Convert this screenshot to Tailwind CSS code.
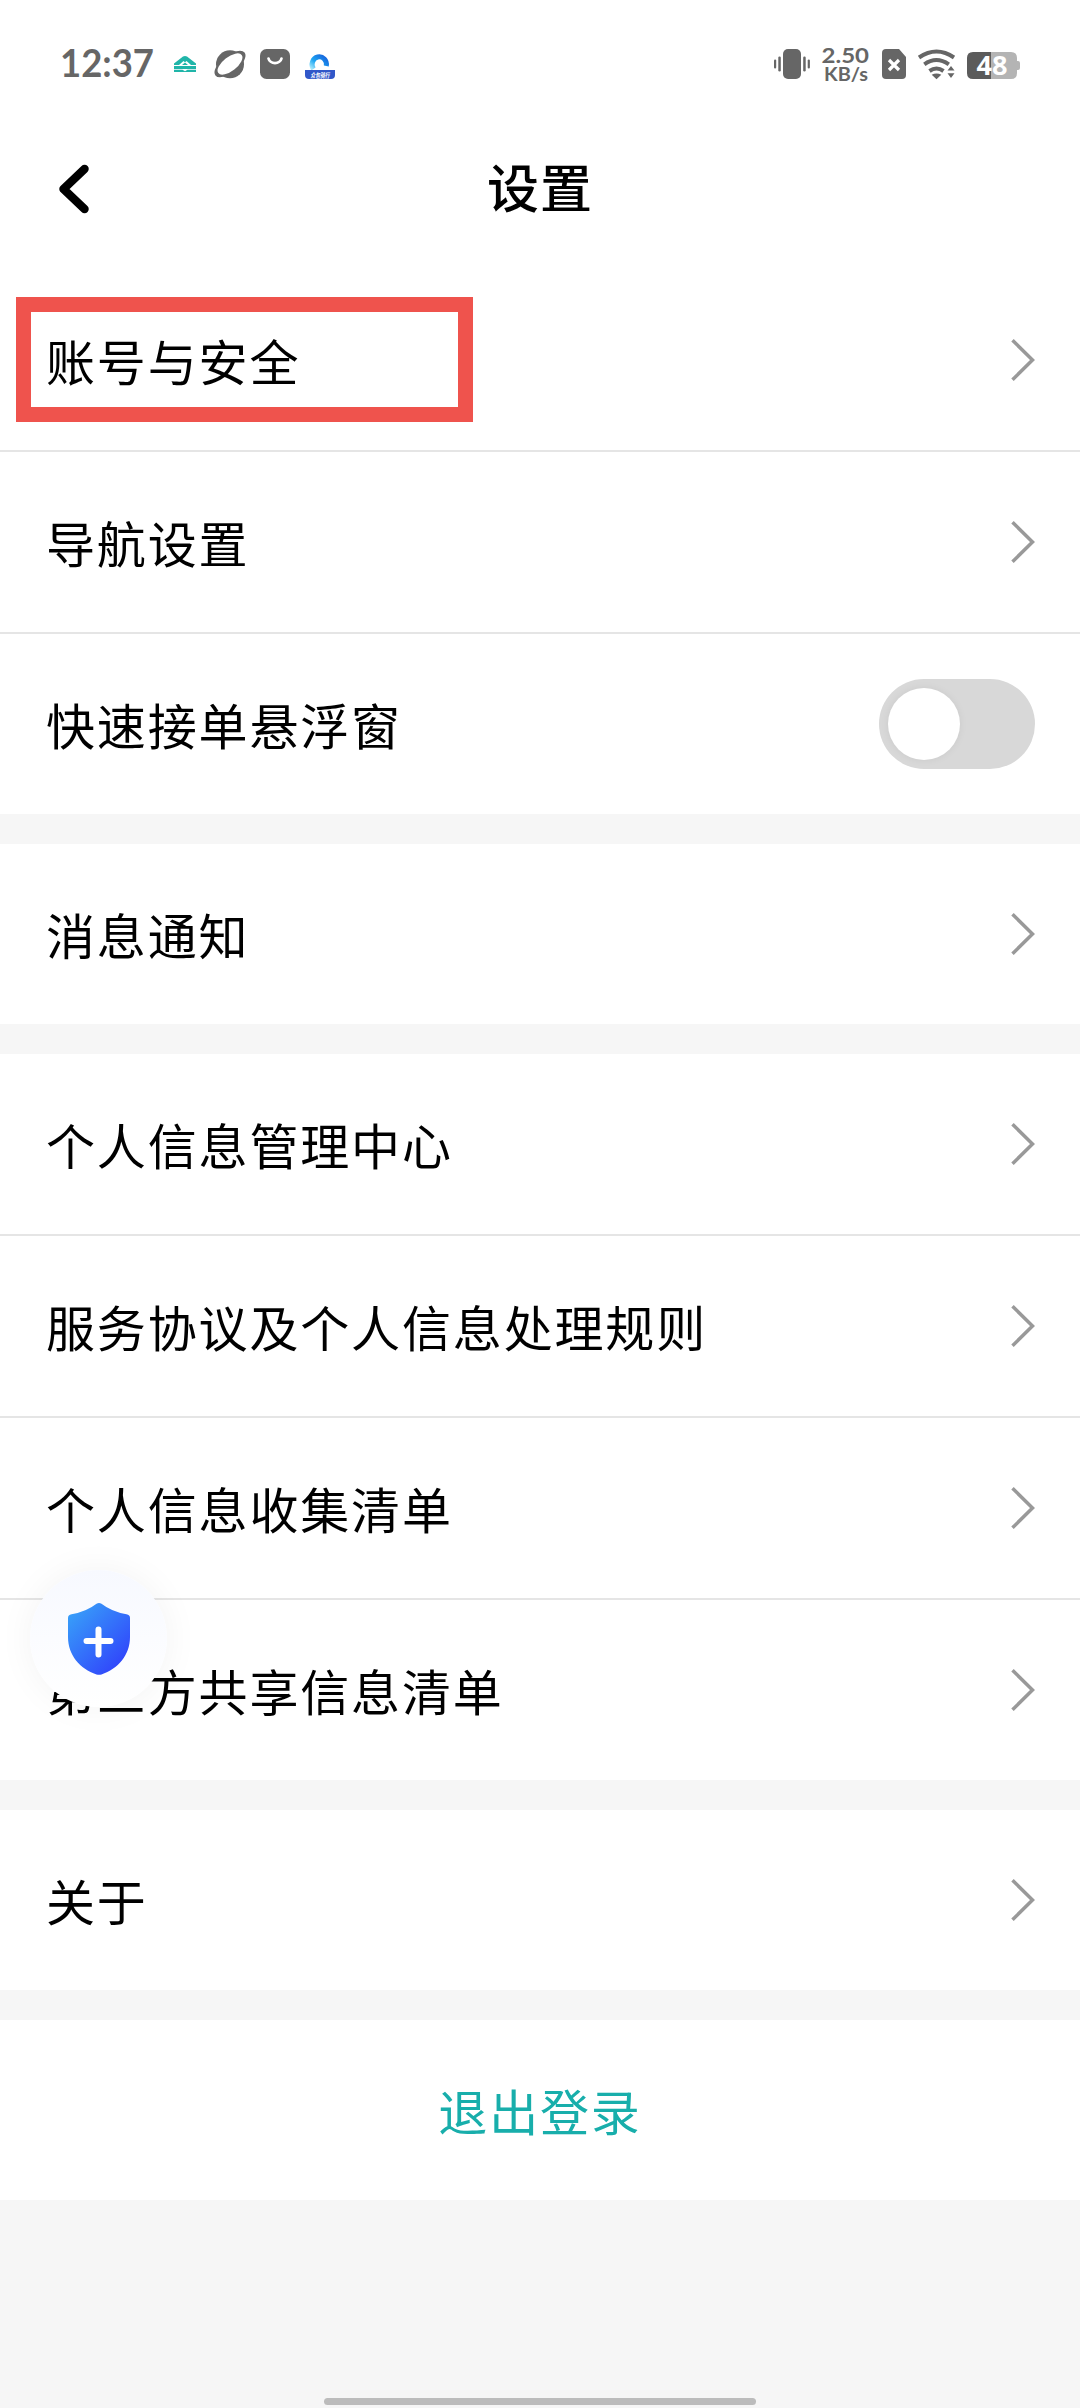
<!DOCTYPE html>
<html lang="zh-CN">
<head>
<meta charset="utf-8">
<title>设置</title>
<script src="https://cdn.jsdelivr.net/npm/@tailwindcss/browser@4"></script>
</head>
<body class="relative flex h-[2408px] w-[1080px] flex-col overflow-hidden bg-[#f6f6f6] font-['Noto_Sans_CJK_SC',sans-serif] text-[49px] leading-[72px] tracking-[1.85px] text-black">
<svg class="hidden">
  <symbol id="next" viewBox="0 0 24 44"><path d="M1.500 2.200 21.500 22 1.500 41.800" fill="none" stroke="#999" stroke-width="3.500"/></symbol>
</svg>

<!-- Status bar -->
<header class="flex h-[128px] shrink-0 items-start justify-between bg-white px-[60px] pt-[40px] tracking-normal">
  <svg class="h-[50px] w-[290px]" viewBox="60 40 290 50">
    <text x="60" y="77.300" font-family="Lato, sans-serif" font-weight="700" font-size="38" fill="#666" textLength="94" lengthAdjust="spacingAndGlyphs">12:37</text>
    <g fill="#20b5a9">
      <path fill-rule="evenodd" d="M174 65v-1.500L183 56.600q2-1.400 4 0l9 6.900V65h-5l-4.500-4-1.500 1.300L183.500 61 179 65Z"/>
      <path d="m182 65 3-2.400 3 2.400Z"/>
      <path d="M174 66h22v3h-22ZM174 69.800h8.500l2.500 1.500 2.500-1.500h8.500V72h-22Z"/>
    </g>
    <circle cx="230" cy="64.300" r="14" fill="#666"/>
    <ellipse cx="230" cy="64" rx="18.500" ry="8.500" transform="rotate(-38 230 64)" fill="#666"/>
    <ellipse cx="230" cy="64" rx="14.800" ry="7" transform="rotate(-38 230 64)" fill="#fff"/>
    <rect x="260" y="49" width="30" height="30" rx="6.500" fill="#666"/>
    <path d="M268.500 58.500a6.600 5.500 0 0 0 13 0" fill="none" stroke="#fff" stroke-width="2.700" stroke-linecap="round"/>
    <defs><linearGradient id="arc" x1="0" y1="1" x2="1" y2="0"><stop offset="0" stop-color="#a5e7fb"/><stop offset=".4" stop-color="#1da7f3"/><stop offset="1" stop-color="#1763dc"/></linearGradient></defs>
    <path d="M313.500 69A7.200 7.600 0 1 1 326.300 66" fill="none" stroke="url(#arc)" stroke-width="5"/>
    <path d="M305 70h30v5q0 4-4 4h-22q-4 0-4-4Z" fill="#3157c9"/>
    <text x="310.500" y="77.500" font-family="Noto Sans CJK SC, sans-serif" font-weight="700" font-size="7" fill="#fff" textLength="19" lengthAdjust="spacingAndGlyphs" font-style="italic">众包骑行</text>
  </svg>
  <svg class="-mr-[2px] h-[50px] w-[250px]" viewBox="772 40 250 50">
    <g fill="#666">
      <rect x="783" y="49" width="18" height="30" rx="5"/>
      <rect x="778.300" y="56.500" width="2.500" height="15" rx="1.200"/><rect x="774" y="59.500" width="2.200" height="9" rx="1.100"/>
      <rect x="803.200" y="56.500" width="2.500" height="15" rx="1.200"/><rect x="807.700" y="59.500" width="2.200" height="9" rx="1.100"/>
      <text x="821.500" y="62.500" font-family="Lato, sans-serif" font-weight="700" font-size="21.500" textLength="47.500" lengthAdjust="spacingAndGlyphs">2.50</text>
      <text x="824" y="80.600" font-family="Lato, sans-serif" font-weight="700" font-size="18.500" textLength="44" lengthAdjust="spacingAndGlyphs">KB/s</text>
      <path d="M886 49h13l7 8v18q0 4-4 4h-16q-4 0-4-4V53q0-4 4-4Z"/>
    </g>
    <path d="m889 60 10 10m0-10-10 10" stroke="#fff" stroke-width="3.200"/>
    <g fill="none" stroke="#666" stroke-width="4">
      <path d="M919 57.500q17.500-12 35 0"/>
      <path d="M924.300 64.300q12-8.500 24.500 0"/>
      <path d="M929.500 71q7-5 14 0"/>
    </g>
    <path d="M931.700 74.800q4.800-2.800 9.600 0l-4.800 4.400ZM947.500 70.500l3.500-4.500 3.500 4.500ZM947.500 73.200l3.500 4.800 3.500-4.800Z" fill="#666"/>
    <path d="M973 52h18v27h-18q-6 0-6-6V58q0-6 6-6Z" fill="#5b5b5b"/>
    <path d="M991 52h20q6 0 6 6v3h1q2 0 2 2v5q0 2-2 2h-1v3q0 6-6 6h-20Z" fill="#b4b4b4"/>
    <text x="976.500" y="75" font-family="Open Sans, sans-serif" font-weight="700" font-size="26" fill="#fff" textLength="31" lengthAdjust="spacingAndGlyphs">48</text>
  </svg>
</header>

<!-- Title bar -->
<div class="grid h-[142px] shrink-0 grid-cols-[1fr_auto_1fr] items-start bg-white px-[58px]">
  <svg class="mt-[36px] h-[50px] w-[32px]" viewBox="0 0 32 50"><path d="M26.500 5 5.500 25l21 20" fill="none" stroke="#000" stroke-width="8.500" stroke-linecap="round" stroke-linejoin="round"/></svg>
  <h1 class="mt-[20px] text-[52px] leading-[76px] font-medium tracking-[1px]">设置</h1>
</div>

<main class="flex shrink-0 flex-col gap-[30px]">
  <section class="bg-white">
    <div class="relative flex h-[180px] items-center justify-between pr-[45px] pl-[46px]">
      <span>账号与安全</span>
      <svg class="h-[44px] w-[24px]"><use href="#next"/></svg>
      <div class="absolute top-[27px] left-[16px] h-[125px] w-[457px] border-[15px] border-[#ef534d]"></div>
    </div>
    <div class="flex h-[182px] items-center justify-between border-t-2 border-[#e5e5e5] pr-[45px] pl-[46px]"><span>导航设置</span><svg class="h-[44px] w-[24px]"><use href="#next"/></svg></div>
    <div class="flex h-[182px] items-center justify-between border-t-2 border-[#e5e5e5] pr-[45px] pl-[46px]">
      <span>快速接单悬浮窗</span>
      <div class="flex h-[90px] w-[156px] items-center rounded-full bg-[#d8d8d8] p-[9px]"><div class="size-[72px] rounded-full bg-white shadow-[0_0_8px_rgba(0,0,0,0.06)]"></div></div>
    </div>
  </section>

  <section class="bg-white">
    <div class="flex h-[180px] items-center justify-between pr-[45px] pl-[46px]"><span>消息通知</span><svg class="h-[44px] w-[24px]"><use href="#next"/></svg></div>
  </section>

  <section class="bg-white">
    <div class="flex h-[180px] items-center justify-between pr-[45px] pl-[46px]"><span>个人信息管理中心</span><svg class="h-[44px] w-[24px]"><use href="#next"/></svg></div>
    <div class="flex h-[182px] items-center justify-between border-t-2 border-[#e5e5e5] pr-[45px] pl-[46px]"><span>服务协议及个人信息处理规则</span><svg class="h-[44px] w-[24px]"><use href="#next"/></svg></div>
    <div class="flex h-[182px] items-center justify-between border-t-2 border-[#e5e5e5] pr-[45px] pl-[46px]"><span>个人信息收集清单</span><svg class="h-[44px] w-[24px]"><use href="#next"/></svg></div>
    <div class="flex h-[182px] items-center justify-between border-t-2 border-[#e5e5e5] pr-[45px] pl-[46px]"><span>第三方共享信息清单</span><svg class="h-[44px] w-[24px]"><use href="#next"/></svg></div>
  </section>

  <section class="bg-white">
    <div class="flex h-[180px] items-center justify-between pr-[45px] pl-[46px]"><span>关于</span><svg class="h-[44px] w-[24px]"><use href="#next"/></svg></div>
  </section>

  <section class="bg-white">
    <button class="flex h-[180px] w-full items-center justify-center text-[#18aeab]"><span>退出登录</span></button>
  </section>
</main>

<!-- Floating safety button -->
<div class="absolute top-[1570px] left-[30px] flex size-[137px] items-center justify-center rounded-full bg-linear-to-b from-[#f7f9ff] to-white shadow-[0_0_36px_rgba(0,0,0,0.05)]">
  <svg class="h-[72px] w-[62px]" viewBox="0 0 62 72">
    <defs><linearGradient id="shield" x1="0" y1=".1" x2=".8" y2="1"><stop offset="0" stop-color="#38a2f9"/><stop offset="1" stop-color="#3041fb"/></linearGradient></defs>
    <path d="M28.500.8q2.500-1.400 5 0Q44 9 58.500 11.200q3.500.5 3.500 3.800v19C62 52 50 66 33.500 71.400q-2.500.9-5 0C12 66 0 52 0 34V15q0-3.300 3.500-3.800Q18 9 28.500.8Z" fill="url(#shield)"/>
    <path d="M18.500 38h24M30.500 26.500v25" stroke="#fff" stroke-width="6" stroke-linecap="round"/>
  </svg>
</div>

<!-- Gesture bar -->
<div class="mx-auto mt-auto mb-[3px] h-[7px] w-[432px] shrink-0 rounded-full bg-[#bcbcbc]"></div>
</body>
</html>
